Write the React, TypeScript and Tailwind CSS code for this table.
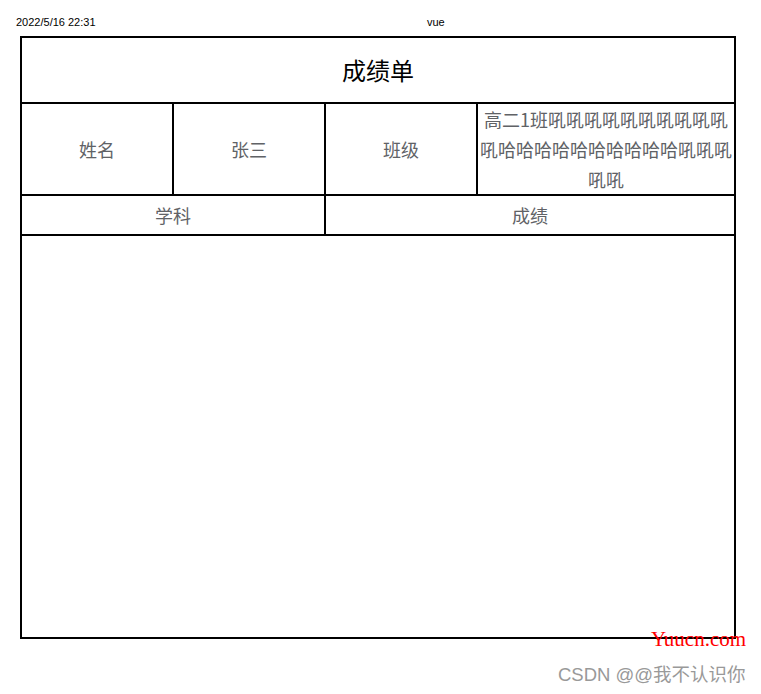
import React from "react";

const cell = "flex items-center justify-center text-center text-[18px] text-[#606266]";

export default function App() {
  return (
    <div className="relative w-[761px] h-[694px] bg-white" style={{ fontFamily: '"Noto Sans CJK SC", "Noto Sans", sans-serif' }}>
      <div className="flex items-start h-[36px] pl-[16px] pt-[15px] text-[11px] leading-[14px] text-black" style={{ fontFamily: '"Liberation Sans", Arial, sans-serif' }}>
        <span className="w-[411px]">2022/5/16 22:31</span>
        <span>vue</span>
      </div>
      <div className="ml-[20px] w-[716px] border-2 border-black flex flex-col">
        <div className="h-[66px] border-b-2 border-black flex items-center justify-center text-[24px] text-black">成绩单</div>
        <div className="flex h-[92px] border-b-2 border-black">
          <div className={`${cell} w-[152px] border-r-2 border-black`}>姓名</div>
          <div className={`${cell} w-[152px] border-r-2 border-black`}>张三</div>
          <div className={`${cell} w-[152px] border-r-2 border-black`}>班级</div>
          <div className={`${cell} w-[256px] leading-[30px] break-all`}>高二1班吼吼吼吼吼吼吼吼吼吼吼哈哈哈哈哈哈哈哈哈哈吼吼吼吼吼</div>
        </div>
        <div className="flex h-[40px] border-b-2 border-black">
          <div className={`${cell} w-[304px] border-r-2 border-black`}>学科</div>
          <div className={`${cell} flex-1`}>成绩</div>
        </div>
        <div className="h-[401px]"></div>
      </div>
      <div className="absolute left-[651px] top-[627px] text-[21px] leading-[24px] text-[#ff0000]" style={{ fontFamily: '"Liberation Serif", serif' }}>Yuucn.com</div>
      <div className="absolute left-[558px] top-[662px] text-[18.5px] leading-[26px] text-[#999999]" style={{ fontFamily: '"Liberation Sans", "Noto Sans CJK SC", sans-serif' }}>CSDN @@我不认识你</div>
    </div>
  );
}
